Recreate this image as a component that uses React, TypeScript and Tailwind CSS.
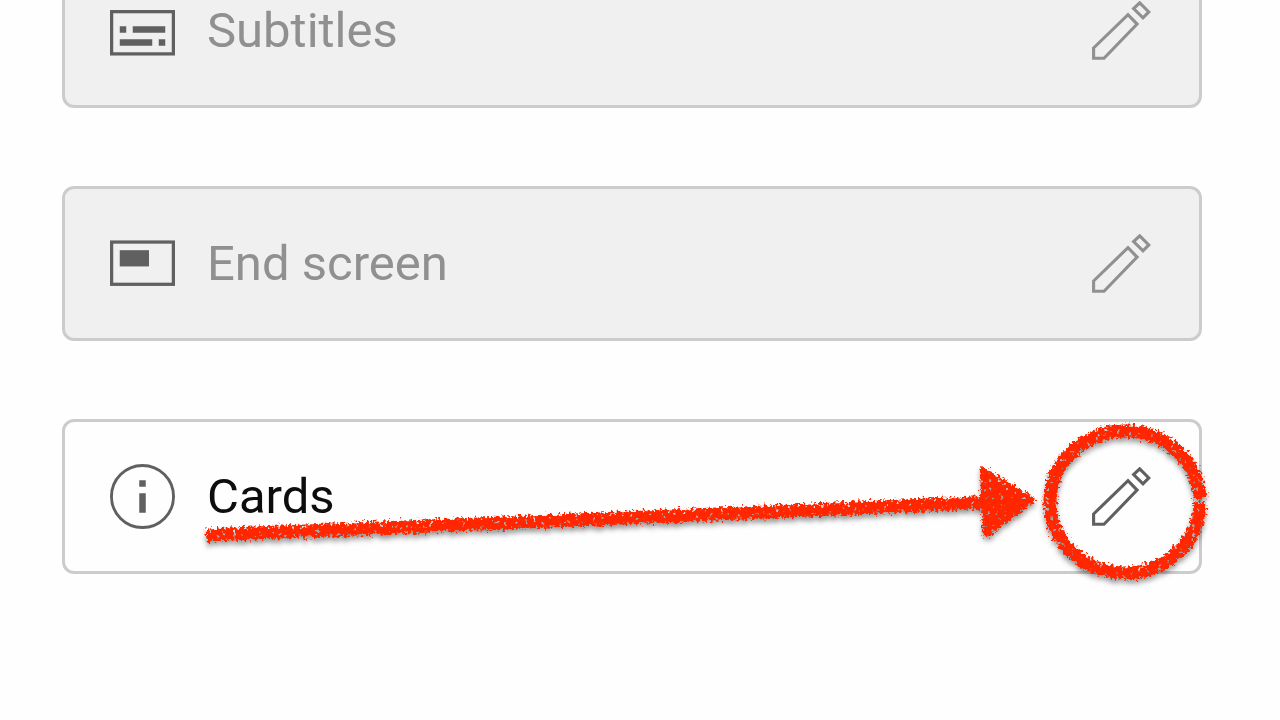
import type { ReactNode } from "react";

function SubtitlesIcon() {
  return (
    <svg viewBox="0 0 20 20" className="size-[65px] shrink-0 text-[#606060]" aria-hidden="true">
      <rect x="0.5" y="4.2" width="19" height="13" fill="none" stroke="currentColor" />
      <path d="M3 8.7h2v2H3zM7 8.7h10v2H7zM3 12.7h10v2H3zM15 12.7h2v2h-2z" fill="currentColor" />
    </svg>
  );
}

function EndScreenIcon() {
  return (
    <svg viewBox="0 0 20 20" className="size-[65px] shrink-0 text-[#606060]" aria-hidden="true">
      <rect x="0.5" y="3.4" width="19" height="13" fill="none" stroke="currentColor" />
      <path d="M3 5.9h9v5H3z" fill="currentColor" />
    </svg>
  );
}

function InfoIcon() {
  return (
    <svg viewBox="0 0 20 20" className="size-[65px] shrink-0 text-[#606060]" aria-hidden="true">
      <circle cx="10" cy="10" r="9.55" fill="none" stroke="currentColor" strokeWidth="0.9" />
      <path d="M9 5h2v2H9zM9 9h2v6H9z" fill="currentColor" />
    </svg>
  );
}

function PencilIcon() {
  return (
    <svg viewBox="0 0.8 60 60" className="size-[60px]" fill="none" stroke="currentColor" strokeWidth="3.1" aria-hidden="true">
      <path d="M1.6 47.8 36 14.4 45.1 23.9 12 58.1H1.6z" />
      <path d="M47.7 2.6 56.8 11.7 51 17.7 41.6 8.3z" />
    </svg>
  );
}

function Annotation() {
  return (
    <svg
      viewBox="200 415 1012 185"
      className="pointer-events-none absolute -top-[7px] -right-[13px] h-[185px] w-[1012px]"
      aria-hidden="true"
    >
      <defs>
        <filter id="chalk" filterUnits="userSpaceOnUse" x="200" y="415" width="1012" height="185" colorInterpolationFilters="sRGB">
          <feTurbulence type="fractalNoise" baseFrequency="0.36" numOctaves="2" seed="7" result="noise" />
          <feDisplacementMap in="SourceGraphic" in2="noise" scale="10" xChannelSelector="R" yChannelSelector="G" result="rough" />
          <feTurbulence type="fractalNoise" baseFrequency="0.24" numOctaves="2" seed="21" result="grain" />
          <feColorMatrix in="grain" type="matrix" values="0 0 0 0 0  0 0 0 0 0  0 0 0 0 0  0 0 0 -10 7.5" result="holes" />
          <feComposite in="rough" in2="holes" operator="in" result="textured" />
          <feGaussianBlur in="textured" stdDeviation="0.5" result="stroke" />
          <feDropShadow in="stroke" dx="0" dy="4" stdDeviation="2.5" floodColor="#000" floodOpacity="0.4" />
        </filter>
      </defs>
      <g filter="url(#chalk)">
        <path d="M206 535 490 523.5 985 502.5" fill="none" stroke="#ff2600" strokeWidth="13" />
        <path d="M983 470 1032 500 986 534z" fill="#ff2600" stroke="#ff2600" strokeWidth="6" strokeLinejoin="round" />
        <ellipse
          cx="1125"
          cy="502"
          rx="75"
          ry="71"
          fill="none"
          stroke="#ff2600"
          strokeWidth="13"
          pathLength="100"
          strokeDasharray="99.2 0.8"
        />
      </g>
    </svg>
  );
}

type RowProps = { icon: ReactNode; label: string; disabled?: boolean; children?: ReactNode };

function ElementRow({ icon, label, disabled = false, children }: RowProps) {
  return (
    <li
      className={`relative flex items-center gap-8 rounded-xl border-[3px] border-[#cccccc] py-[42px] pr-[47px] pl-[45px] ${
        disabled ? "bg-[#f0f0f0] text-[#909090]" : "bg-[#fefefe] text-[#0d0d0d]"
      }`}
    >
      {icon}
      <span className="flex-1 text-[49px] leading-[64px]">{label}</span>
      <button
        type="button"
        aria-label={`Edit ${label}`}
        disabled={disabled}
        className={`shrink-0 ${disabled ? "text-[#909090]" : "text-[#606060]"}`}
      >
        <PencilIcon />
      </button>
      {children}
    </li>
  );
}

export default function App() {
  return (
    <main className="h-screen overflow-hidden bg-[#fefefe] font-[Roboto,sans-serif]">
      <ul className="-mt-[47px] flex flex-col gap-[78px] pr-[78px] pl-[62px]">
        <ElementRow icon={<SubtitlesIcon />} label="Subtitles" disabled />
        <ElementRow icon={<EndScreenIcon />} label="End screen" disabled />
        <ElementRow icon={<InfoIcon />} label="Cards">
          <Annotation />
        </ElementRow>
      </ul>
    </main>
  );
}
